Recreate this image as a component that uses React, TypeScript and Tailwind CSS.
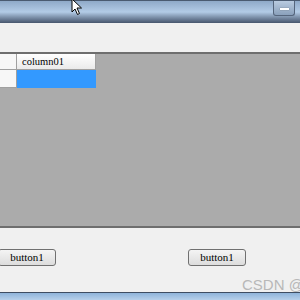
import React from "react";

const Btn: React.FC<{ className?: string }> = ({ className = "" }) => (
  <button
    className={`h-[17px] w-[58px] rounded-[3px] border border-[#707070] bg-gradient-to-b from-[#f4f4f4] to-[#dddddd] text-[11px] leading-none text-black ${className}`}
    style={{ fontFamily: '"Liberation Serif", serif' }}
  >
    button1
  </button>
);

export default function App() {
  return (
    <div className="relative flex h-[300px] w-[300px] flex-col overflow-hidden bg-[#f0f0f0]">
      {/* title bar */}
      <div className="relative h-[23px] shrink-0 border-t border-[#4a5a70] bg-gradient-to-b from-[#8fa9c8] via-[#b3cbe6] to-[#47566d]">
        <div className="absolute right-[5px] top-0 flex h-[15px] w-[22px] items-center justify-center rounded-b-[3px] border border-t-0 border-[#55657c] bg-gradient-to-b from-[#b9cbe0] to-[#8aa0bb]">
          <div className="mt-[2px] h-[2px] w-[9px] bg-white shadow-[0_0_1px_#333]" />
        </div>
        <svg className="absolute left-[71px] top-[-3px]" width="12" height="18" viewBox="0 0 12 18">
          <path d="M1 1 L1 14 L4 11 L6.5 16.5 L8.5 15.5 L6 10 L10.5 10 Z" fill="#fff" stroke="#000" strokeWidth="1" />
        </svg>
      </div>
      {/* toolbar area */}
      <div className="h-[29px] shrink-0 bg-[#f0f0f0]" />
      {/* grid */}
      <div className="flex h-[176px] shrink-0 flex-col border-y-2 border-[#6e6e6e] bg-[#ababab]">
        <div className="flex h-[16px]">
          <div className="w-[17px] border-r border-b border-[#a0a0a0] bg-[#f7f7f7]" />
          <div
            className="flex w-[79px] items-center border-r border-b border-[#a0a0a0] bg-gradient-to-b from-white to-[#eaeaea] pl-[5px] text-[10.5px] text-black"
            style={{ fontFamily: '"Liberation Serif", serif' }}
          >
            column01
          </div>
        </div>
        <div className="flex h-[18px]">
          <div className="w-[17px] border-r border-b border-[#a0a0a0] bg-[#f7f7f7]" />
          <div className="w-[79px] bg-[#3399ff]" />
        </div>
      </div>
      {/* buttons area */}
      <div className="relative flex-1">
        <div className="flex pt-[21px]">
          <Btn className="-ml-[2px]" />
          <Btn className="ml-[132px]" />
        </div>
        <div
          className="absolute bottom-[0px] left-[242px] whitespace-nowrap text-[15px] leading-none text-[#b8b8b8]"
          style={{ fontFamily: '"Liberation Sans", "Noto Sans CJK SC", sans-serif' }}
        >
          CSDN @河豚
        </div>
      </div>
      {/* bottom strip */}
      <div className="h-[8px] shrink-0 border-t border-[#3e4d62] bg-gradient-to-b from-[#8fb4da] to-[#b7d0ea]" />
    </div>
  );
}
